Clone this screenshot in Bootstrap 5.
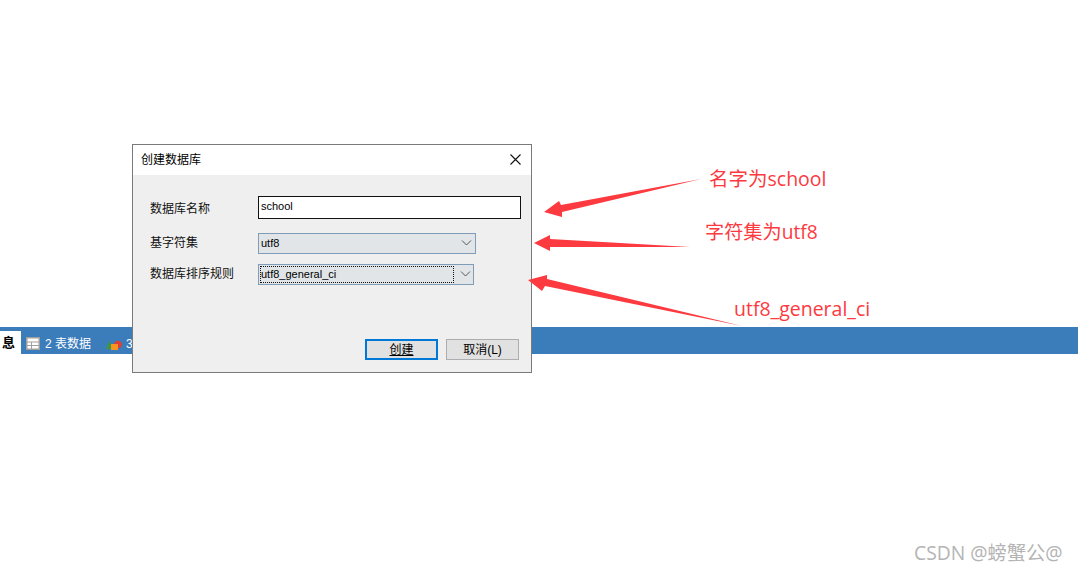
<!DOCTYPE html>
<html lang="zh-CN">
<head>
    <meta charset="UTF-8">
    <meta name="viewport" content="width=device-width, initial-scale=1.0">
    <title>创建数据库</title>
    <link rel="stylesheet" href="https://cdn.jsdelivr.net/npm/bootstrap@5.3.0/dist/css/bootstrap.min.css">
    <style>
        html, body { height: 572px; overflow: hidden; background: #fff; }
        body { position: relative; font-family: "Liberation Sans", "Noto Sans CJK SC", sans-serif; font-size: 12px; color: #000; }

        .tab-bar { margin-top: 327px; height: 27px; background: #3b7cba; color: #fff; padding-top: 4px; font-size: 12px; }
        .tab-on { width: 21px; height: 23px; background: #fff; color: #000; font-weight: 700; font-size: 13px; line-height: 23px; padding-left: 2px; }
        .tab-item { line-height: 23px; }
        .tab-item span { padding-top: 2px; }
        .tab-one { margin-left: 5px; gap: 5px; }
        .tab-two { margin-left: 15px; gap: 4px; }

        .db-dialog { position: absolute; left: 132px; top: 144px; width: 400px; height: 229px; background: #efefef; border: 1px solid #7a7a7a; }
        .db-title { height: 30px; background: #fff; padding: 0 9px 0 8px; }
        .db-close { width: 13px; height: 13px; margin-bottom: 2px; }
        .db-body { padding: 20px 10px 0 17px; }
        .db-row { height: 24px; }
        .db-row-b { height: 22px; margin-top: 13px; }
        .db-row-c { height: 22px; margin-top: 9px; }
        .db-label { width: 108px; flex: none; color: #111; }
        .db-label-low { padding-top: 3px; }
        .db-input { width: 263px; height: 23px; padding: 0 2px; border: 1px solid #111; border-radius: 0; background: #fff; font-size: 11px; line-height: 18px; color: #000; }
        .db-combo { height: 21px; background: #e1e5e8; border: 1px solid #7f9db9; padding: 0 3px 0 2px; font-size: 11px; }
        .combo-one { width: 218px; }
        .combo-two { width: 216px; padding: 0 2px 0 1px; }
        .combo-focus { width: 194px; height: 17px; border: 1px dotted #111; line-height: 15px; }
        .db-chev { width: 11px; height: 6px; }
        .db-foot { position: absolute; right: 12px; bottom: 12px; }
        .db-btn { width: 73px; height: 21px; padding: 0; border-radius: 0; border: 1px solid #adadad; background: #e1e1e1; color: #000; font-size: 12px; line-height: 18px; }
        .db-btn:hover { background: #e1e1e1; color: #000; border-color: #adadad; }
        .db-btn-main { border: 2px solid #0078d7; }
        .db-btn-main:hover { border-color: #0078d7; }
        .db-btn-main u { text-underline-offset: 1px; }

        .note-layer { position: absolute; left: 0; top: 0; width: 1078px; height: 572px; pointer-events: none; }
        .note-text { position: absolute; color: #fc3a3f; font-family: "Open Sans", "Noto Sans CJK SC", sans-serif; font-size: 19.5px; line-height: 24px; white-space: nowrap; }
        .note-a { left: 709px; top: 167px; }
        .note-b { left: 705px; top: 220px; font-size: 19.2px; }
        .note-c { left: 734px; top: 297px; }
        .csdn-mark { position: absolute; left: 914px; top: 541px; color: #b4b4b4; font-family: "Open Sans", "Noto Sans CJK SC", sans-serif; font-size: 19.3px; line-height: 24px; white-space: nowrap; }
    </style>
</head>
<body>
    <div class="tab-bar d-flex align-items-start">
        <div class="tab-on">息</div>
        <div class="tab-item tab-one d-flex align-items-center">
            <svg width="14" height="13" viewBox="0 0 14 13">
                <rect x="0" y="0" width="14" height="13" fill="#a0a0a0"/>
                <rect x="1.5" y="1.5" width="11" height="10" fill="#fff"/>
                <path d="M1 5H13M1 8.5H13M5.5 5V12" stroke="#a0a0a0" stroke-width="1"/>
            </svg>
            <span>2 表数据</span>
        </div>
        <div class="tab-item tab-two d-flex align-items-center">
            <svg width="16" height="13" viewBox="0 0 16 13">
                <path d="M0 12L3.5 4L7 12Z" fill="#3c9a3c"/>
                <circle cx="12" cy="7.5" r="3.8" fill="#d8403a"/>
                <rect x="5" y="7" width="7" height="7" fill="#f7931e"/>
            </svg>
            <span>3</span>
        </div>
    </div>

    <div class="db-dialog">
        <div class="db-title d-flex align-items-center justify-content-between">
            <span>创建数据库</span>
            <svg class="db-close" viewBox="0 0 13 13"><path d="M1.5 1.5L11.5 11.5M11.5 1.5L1.5 11.5" stroke="#111" stroke-width="1.1"/></svg>
        </div>
        <div class="db-body">
            <div class="db-row d-flex align-items-center">
                <div class="db-label db-label-low">数据库名称</div>
                <div class="form-control db-input">school</div>
            </div>
            <div class="db-row-b d-flex align-items-center">
                <div class="db-label">基字符集</div>
                <div class="db-combo combo-one d-flex align-items-center justify-content-between">
                    <span>utf8</span>
                    <svg class="db-chev" viewBox="0 0 11 6"><path d="M1 .5L5.5 5L10 .5" fill="none" stroke="#555"/></svg>
                </div>
            </div>
            <div class="db-row-c d-flex align-items-center">
                <div class="db-label">数据库排序规则</div>
                <div class="db-combo combo-two d-flex align-items-center justify-content-between">
                    <div class="combo-focus">utf8_general_ci</div>
                    <svg class="db-chev" viewBox="0 0 11 6"><path d="M1 .5L5.5 5L10 .5" fill="none" stroke="#555"/></svg>
                </div>
            </div>
        </div>
        <div class="db-foot d-flex gap-2">
            <button type="button" class="btn db-btn db-btn-main"><u>创建</u></button>
            <button type="button" class="btn db-btn">取消(L)</button>
        </div>
    </div>

    <svg class="note-layer" viewBox="0 0 1078 572">
        <polygon fill="#fc3a3f" points="701,179 562,212 562,217 544,212 559,201 561,205"/>
        <polygon fill="#fc3a3f" points="690,247 550,247 550,251 534,243 550,235 550,239"/>
        <polygon fill="#fc3a3f" points="742,326 545,286 542,291 528,280 547,275 547,279"/>
    </svg>
    <div class="note-text note-a">名字为school</div>
    <div class="note-text note-b">字符集为utf8</div>
    <div class="note-text note-c">utf8_general_ci</div>
    <div class="csdn-mark">CSDN @螃蟹公@</div>

    <script src="https://cdn.jsdelivr.net/npm/bootstrap@5.3.0/dist/js/bootstrap.bundle.min.js"></script>
</body>
</html>
